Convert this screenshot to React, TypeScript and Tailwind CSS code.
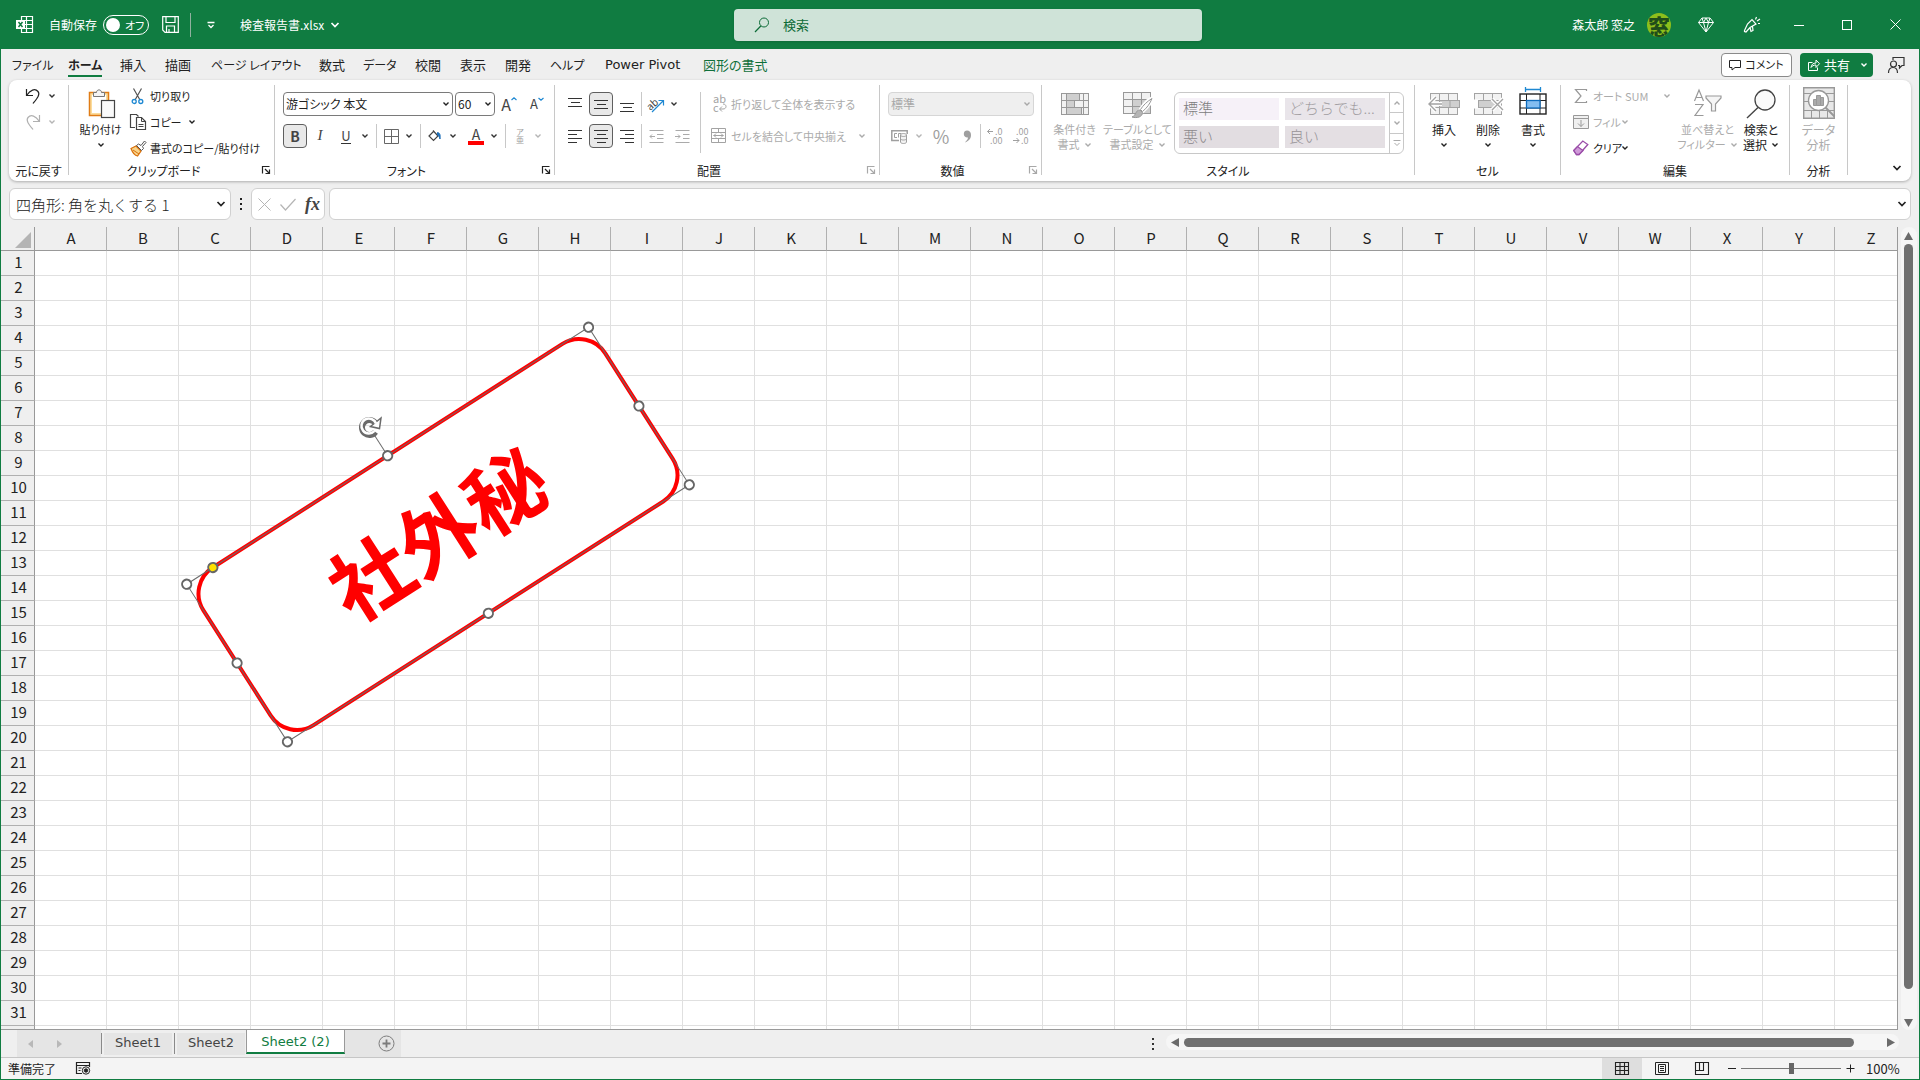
import React from 'react';

type SvgProps = { w: number; h: number; className?: string; children: React.ReactNode };

function Svg({ w, h, className = '', children }: SvgProps) {
  return (
    <svg
      width={w}
      height={h}
      viewBox={`0 0 ${w} ${h}`}
      fill="none"
      stroke="currentColor"
      strokeWidth={1}
      aria-hidden="true"
      className={`shrink-0 overflow-visible ${className}`}
    >
      {children}
    </svg>
  );
}

function Chevron({ className = '' }: { className?: string }) {
  return (
    <Svg w={8} h={6} className={className}>
      <path d="M1.5 1.5 4 4l2.5-2.5" strokeWidth={1.4} />
    </Svg>
  );
}

function BigChevron({ className = '' }: { className?: string }) {
  return (
    <Svg w={10} h={8} className={className}>
      <path d="M1.5 2 5 5.5 8.500 2" strokeWidth={1.7} />
    </Svg>
  );
}

function DropButton({ label, off = false }: { label: string; off?: boolean }) {
  return (
    <button
      type="button"
      aria-label={label}
      className={`flex h-6 w-2 items-center justify-center ${off ? 'text-[#b5b5b5]' : 'text-[#333]'}`}
    >
      <Chevron />
    </button>
  );
}

function IconButton({
  label,
  active = false,
  className = 'w-7',
  children,
}: {
  label: string;
  active?: boolean;
  className?: string;
  children: React.ReactNode;
}) {
  return (
    <button
      type="button"
      aria-label={label}
      aria-pressed={active}
      className={`flex h-6 items-center justify-center ${
        active ? 'rounded border border-[#5f5f5f] bg-[#e9e9e9]' : ''
      } ${className}`}
    >
      {children}
    </button>
  );
}

function Divider({ className = 'h-6' }: { className?: string }) {
  return <div className={`w-px shrink-0 bg-[#c8c8c8] ${className}`} />;
}

function Group({
  title,
  launcher,
  className,
  children,
}: {
  title: string;
  launcher?: 'on' | 'off';
  className: string;
  children: React.ReactNode;
}) {
  return (
    <section aria-label={title} className={`flex h-[90px] shrink-0 flex-col border-r border-[#c8c8c8] ${className}`}>
      <div className="min-h-0 flex-1">{children}</div>
      <div className="flex h-[9px] items-center">
        <div className="flex-1 text-center leading-4 whitespace-nowrap">{title}</div>
        {launcher && (
          <button
            type="button"
            aria-label={`${title}の設定`}
            className={`flex w-4 justify-center ${launcher === 'off' ? 'text-[#a8a8a8]' : 'text-[#222]'}`}
          >
            <Svg w={9} h={9}>
              <path d="M.5 7.500v-7h7M3 3l4 4M7.500 3.500v4h-4" strokeWidth={1.2} />
            </Svg>
          </button>
        )}
      </div>
    </section>
  );
}

function Lines({ rows }: { rows: [number, number, number][] }) {
  return (
    <Svg w={15} h={15} className="text-[#333]">
      {rows.map(([x, y, len]) => (
        <path key={y} d={`M${x} ${y}.5h${len}`} />
      ))}
    </Svg>
  );
}

function SmallCommand({
  icon,
  text,
  drop,
  off = false,
  textClass = '',
}: {
  icon: React.ReactNode;
  text: string;
  drop?: boolean;
  off?: boolean;
  textClass?: string;
}) {
  return (
    <button
      type="button"
      className={`flex h-[22px] items-center text-[11px] whitespace-nowrap ${off ? 'text-[#ababab]' : ''}`}
    >
      <span className="flex w-5 shrink-0 items-center">{icon}</span>
      <span className={`text-left ${textClass}`}>{text}</span>
      {drop && <Chevron />}
    </button>
  );
}

function TallCommand({
  icon,
  lines,
  off = false,
  drop,
  className,
}: {
  icon: React.ReactNode;
  lines: string[];
  off?: boolean;
  drop?: 'below' | 'inline';
  className: string;
}) {
  return (
    <button
      type="button"
      className={`flex shrink-0 flex-col items-center whitespace-nowrap ${off ? 'text-[#ababab]' : ''} ${className}`}
    >
      <span className="mb-px flex h-9 items-center">{icon}</span>
      {lines.map((line, i) => (
        <span key={line} className="flex items-center gap-1 leading-[15px]">
          {line}
          {drop === 'inline' && i === lines.length - 1 && <Chevron />}
        </span>
      ))}
      {drop === 'below' && <Chevron className="mt-[5px]" />}
    </button>
  );
}

function CellsIcon({ kind }: { kind: 'insert' | 'delete' | 'format' }) {
  if (kind === 'format') {
    return (
      <Svg w={30} h={36} className="text-[#222]">
        <path d="M8 4.500h14M7.500 2v5M22.500 2v5" stroke="#1e88d2" strokeWidth={1.3} />
        <rect x="2" y="9" width="26" height="20" fill="#fff" strokeWidth={1.4} />
        <path d="M2 15.500h26M2 23h26M8.500 9v20M22 9v20" strokeWidth={1} />
        <rect x="8.500" y="15.500" width="13.500" height="7.500" fill="#83bdf0" stroke="#0f6cbd" strokeWidth={1.3} />
      </Svg>
    );
  }
  return (
    <Svg w={34} h={36} className="text-[#a3a3a3]">
      <rect x="3.500" y="8.500" width="27" height="21" fill="#f2f2f2" />
      <path d="M3 15.500h28M3 22.500h28M12.500 8v22M21.500 8v22" />
      {kind === 'insert' ? (
        <>
          <rect x="12.500" y="15.500" width="20" height="7" fill="#cfcfcf" />
          <path d="M23 15.500v7" />
          <path d="M15 19H3M9 12l-7 7 7 7" stroke="#fff" strokeWidth={4} />
          <path d="M15 19H3M9 12l-7 7 7 7" strokeWidth={1.4} />
        </>
      ) : (
        <>
          <path d="M2 15.500h6v7H2z" fill="#fff" stroke="#fff" strokeWidth={2} />
          <rect x="7.500" y="15.500" width="16" height="7" fill="#cfcfcf" />
          <path d="m21 14 11 11M32 14 21 25" stroke="#fff" strokeWidth={4} />
          <path d="m21 14 11 11M32 14 21 25" strokeWidth={1.4} />
        </>
      )}
    </Svg>
  );
}

function GalleryCell({ text, className }: { text: string; className: string }) {
  return (
    <button
      type="button"
      className={`h-[22px] w-[100px] overflow-hidden pb-[2px] pl-1 text-left text-[15px] leading-5 font-light whitespace-nowrap [font-feature-settings:normal] ${className}`}
    >
      {text}
    </button>
  );
}

function TitleBar() {
  return (
    <header className="grid h-[49px] shrink-0 grid-cols-[733fr_468fr_717fr] items-center bg-[#107c41] text-white">
      <div className="flex items-center pl-[15px] whitespace-nowrap">
        <Svg w={17} h={17}>
          <path d="M5.500 4V.5h11v16h-11V13M5 4.500h11M5 8.500h11M5 12.500h11M10.500 1v15" strokeWidth={1.2} />
          <rect x="0" y="4" width="9" height="9" fill="#fff" stroke="none" />
          <path d="m2.500 6 4 5M6.500 6l-4 5" stroke="#107c41" strokeWidth={1.5} />
        </Svg>
        <label className="ml-4 flex items-center gap-[6px]">
          <span>自動保存</span>
          <input type="checkbox" role="switch" className="sr-only" />
          <span className="flex h-5 w-[46px] items-center gap-[5px] rounded-full border border-white pl-[2px]">
            <span className="size-[14px] rounded-full bg-white" />
            <span className="text-[11px] leading-4">オフ</span>
          </span>
        </label>
        <button type="button" aria-label="上書き保存" className="ml-[13px]">
          <Svg w={17} h={17}>
            <path d="M.7.700h15.600v15.600H3L.7 14zM4 .7v5.800h9V.7M4.500 16v-6h8v6M7 16v-3" strokeWidth={1.2} />
          </Svg>
        </button>
        <Divider className="ml-[11px] h-6 opacity-70" />
        <button type="button" aria-label="クイック アクセス" className="ml-4">
          <Svg w={8} h={8}>
            <path d="M.5 1.500h7M1.500 4 4 6.500 6.500 4" strokeWidth={1.3} />
          </Svg>
        </button>
        <button type="button" className="ml-[25px] flex items-center gap-[6px]">
          検査報告書.xlsx
          <BigChevron />
        </button>
      </div>
      <label className="flex h-8 items-center rounded bg-[#cfe3d8] pl-5 text-[13px] text-[#0c6b37] shadow">
        <Svg w={16} h={16} className="mr-[13px]">
          <circle cx="10" cy="5.500" r="4.500" />
          <path d="M6.800 9 1 15" strokeWidth={1.200} />
        </Svg>
        <input
          type="text"
          aria-label="検索"
          placeholder="検索"
          className="min-w-0 flex-1 bg-transparent outline-none placeholder:text-[#0c6b37]"
        />
      </label>
      <div className="flex items-center justify-end whitespace-nowrap">
        <span>森太郎 窓之</span>
        <span className="mr-[27px] ml-3 flex size-6 items-center justify-center overflow-hidden rounded-full bg-[#8dbf1c] text-[22px] leading-6 font-black text-[#1f4d1a]">
          窓
        </span>
        <button type="button" aria-label="Premium">
          <Svg w={16} h={16}>
            <path d="M4 1h8l3.500 4.500L8 15 .5 5.500zM.5 5.500h15M5.500 5.500 8 15l2.500-9.500M4 1l1.500 4.500L8 1l2.500 4.500L12 1" />
          </Svg>
        </button>
        <button type="button" aria-label="ペン" className="ml-[29px]">
          <Svg w={18} h={18}>
            <path
              d="M1.500 14.500 4.500 8 9 3.500l4 4.500-6 3.500-4 4.500-1.500-.5zM7 11.500l1 4 2-1-.5-4M12.500 3.500 13.500 1M14 5l3-2M15 7.500h2"
              strokeWidth={1.200}
            />
          </Svg>
        </button>
        <button type="button" aria-label="最小化" className="ml-[14px] flex w-12 justify-center">
          <Svg w={10} h={10}>
            <path d="M0 5.500h10" />
          </Svg>
        </button>
        <button type="button" aria-label="最大化" className="flex w-12 justify-center">
          <Svg w={10} h={10}>
            <rect x=".5" y=".5" width="9" height="9" />
          </Svg>
        </button>
        <button type="button" aria-label="閉じる" className="flex w-12 justify-center">
          <Svg w={11} h={11}>
            <path d="m.5.5 10 10M10.500.5l-10 10" />
          </Svg>
        </button>
      </div>
    </header>
  );
}

const tabs: [string, string][] = [
  ['ファイル', 'w-14 text-xs'],
  ['ホーム', 'w-[52px] text-xs'],
  ['挿入', 'w-[45px]'],
  ['描画', 'w-[46px]'],
  ['ページ レイアウト', 'w-[108px] text-xs'],
  ['数式', 'w-11'],
  ['データ', 'w-[52px] text-xs'],
  ['校閲', 'w-[45px]'],
  ['表示', 'w-[45px]'],
  ['開発', 'w-[45px]'],
  ['ヘルプ', 'w-[55px] text-xs'],
  ['Power Pivot', 'w-[98px]'],
  ['図形の書式', 'w-20'],
];

function TabRow() {
  return (
    <nav className="flex h-[31px] shrink-0 items-center pr-[14px] pl-[11px] text-[13px] whitespace-nowrap">
      {tabs.map(([name, width]) => (
        <div key={name} className={`shrink-0 ${width}`}>
          <button
            type="button"
            className={`flex h-6 items-center border-b-2 pt-[3px] ${
              name === 'ホーム'
                ? 'border-[#107c41] font-bold'
                : name === '図形の書式'
                  ? 'border-transparent text-[#0f703b]'
                  : name === 'Power Pivot'
                    ? "border-transparent [font-family:'DejaVu_Sans',sans-serif]"
                    : 'border-transparent'
            }`}
          >
            {name}
          </button>
        </div>
      ))}
      <button
        type="button"
        className="ml-auto flex h-6 w-[71px] items-center justify-center gap-1 rounded border border-[#8a8a8a] bg-white text-[11px]"
      >
        <Svg w={12} h={12}>
          <path d="M.5 1.500h11v7H6L3 11V8.500H.5z" />
        </Svg>
        コメント
      </button>
      <button
        type="button"
        className="ml-2 flex h-6 w-[73px] items-center rounded bg-[#107c41] pl-2 text-[13px] text-white"
      >
        <Svg w={12} h={13}>
          <path d="M4.500 4.500h-4v8h9v-3M3 9.500c.5-3 2-4.500 5-4.500V2l3.500 3.700L8 9.500V7C5.500 7 4 8 3 9.500z" />
        </Svg>
        <span className="ml-1">共有</span>
        <Chevron className="ml-[10px]" />
      </button>
      <button type="button" aria-label="共同編集" className="ml-[14px]">
        <Svg w={18} h={18} className="text-[#333]">
          <path d="M6 4V1.500h11v8h-2L12.500 12V9.500H11M1.500 17c0-4 2-5.500 4.500-5.500s4.500 1.500 4.500 5.500" strokeWidth={1.200} />
          <circle cx="6.500" cy="8" r="3" strokeWidth={1.200} />
        </Svg>
      </button>
    </nav>
  );
}

function Ribbon() {
  return (
    <div className="mx-2 flex h-[101px] shrink-0 overflow-hidden rounded-lg bg-white pt-[5px] shadow-[0_1px_3px_rgba(0,0,0,0.28)]">
      <Group title="元に戻す" className="w-[60px]">
        <div className="flex h-[22px] items-center pl-4">
          <button type="button" aria-label="元に戻す" className="w-[23px]">
            <Svg w={16} h={17}>
              <path d="M1.500 1v6.500H8M2 7c3-5 8-7 11-3.500 2.500 3-1 7-5 12" strokeWidth={1.200} />
            </Svg>
          </button>
          <DropButton label="元に戻す一覧" />
        </div>
        <div className="mt-1 flex h-[22px] items-center pl-4 text-[#b0b0b0]">
          <button type="button" aria-label="やり直し" className="w-[23px]">
            <Svg w={16} h={17}>
              <path d="M14.500 1v6.500H8M14 7C11 2 6 0 3 3.500c-2.500 3 1 7 5 12" strokeWidth={1.200} />
            </Svg>
          </button>
          <DropButton label="やり直し一覧" off />
        </div>
      </Group>

      <Group title="クリップボード" launcher="on" className="w-[206px]">
        <div className="flex">
          <TallCommand
            className="w-[61px] pl-[2px] text-[11px]"
            lines={['貼り付け']}
            drop="below"
            icon={
              <Svg w={28} h={32}>
                <rect x="2.500" y="5.500" width="19" height="23" stroke="#e07c16" strokeWidth={1.500} fill="#fbdc9c" />
                <rect x="5" y="8" width="14" height="18" fill="#fff" stroke="none" />
                <path d="M6.500 9.500V5.500h3c0-3.500 5-3.500 5 0h3v4z" fill="#f4f4f4" stroke="#777" />
                <rect x="14.500" y="13.500" width="13" height="17" fill="#fafafa" stroke="#444" strokeWidth={1.200} />
              </Svg>
            }
          />
          <div className="flex flex-col gap-1">
            <SmallCommand
              text="切り取り"
              icon={
                <Svg w={14} h={17} className="ml-px">
                  <path d="M2.500.5 9 12M10.500.5 4 12" stroke="#555" strokeWidth={1.200} />
                  <circle cx="3.200" cy="13.500" r="2" stroke="#1e88d2" strokeWidth={1.300} />
                  <circle cx="9.800" cy="13.500" r="2" stroke="#1e88d2" strokeWidth={1.300} />
                </Svg>
              }
            />
            <SmallCommand
              text="コピー"
              textClass="w-[38px]"
              drop
              icon={
                <Svg w={17} h={17}>
                  <path d="M5 13.500H.5V.5h6l2 2" stroke="#444" strokeWidth={1.200} />
                  <path d="M6.500 3.500h5l4 4v8h-9z" fill="#fff" stroke="#444" strokeWidth={1.200} />
                  <path d="M11.500 3.500v4h4M8.500 10.500h5M8.500 12.500h5" stroke="#444" />
                </Svg>
              }
            />
            <SmallCommand
              text="書式のコピー/貼り付け"
              icon={
                <Svg w={17} h={17}>
                  <path d="M1 8.500 6 6l5 5-3.500 5c-3-.5-5-3.500-6.500-7.500z" fill="#f8d48b" stroke="#d9700b" strokeWidth={1.200} />
                  <path d="m3 10 6 4" stroke="#d9700b" />
                  <path d="m6.500 5.500 2-1.500 2.500 1.500L14.500 1l1.500 1.500-3.500 4 1 2-2 2z" fill="#fff" stroke="#555" />
                </Svg>
              }
            />
          </div>
        </div>
      </Group>

      <Group title="フォント" launcher="on" className="w-[280px]">
        <div className="flex h-[31px] items-end pl-2">
          <div className="flex h-6 w-[170px] items-center rounded border border-[#7a7a7a] bg-white">
            <select aria-label="フォント名" className="w-full appearance-none bg-transparent pl-[2px] outline-none">
              <option>游ゴシック 本文</option>
            </select>
            <Chevron className="mr-[2px]" />
          </div>
          <div className="ml-[2px] flex h-6 w-10 items-center rounded border border-[#7a7a7a] bg-white">
            <select aria-label="フォント サイズ" className="w-full appearance-none bg-transparent pl-[2px] outline-none">
              <option>60</option>
            </select>
            <Chevron className="mr-[2px]" />
          </div>
          <IconButton label="フォント サイズの拡大" className="w-7">
            <span className="text-base leading-6 text-[#444]">A</span>
            <Svg w={6} h={14}>
              <path d="M.5 3 3 .8 5.500 3" stroke="#1e88d2" strokeWidth={1.200} />
            </Svg>
          </IconButton>
          <IconButton label="フォント サイズの縮小">
            <span className="text-[13px] leading-6 text-[#444]">A</span>
            <Svg w={6} h={14}>
              <path d="M.5 1 3 3.200 5.500 1" stroke="#1e88d2" strokeWidth={1.200} />
            </Svg>
          </IconButton>
        </div>
        <div className="mt-2 flex h-6 items-center pl-2">
          <IconButton label="太字" active className="w-6">
            <span className="text-sm font-bold text-[#444]">B</span>
          </IconButton>
          <IconButton label="斜体" className="w-[26px]">
            <span className="text-[15px] text-[#444] italic [font-family:'Liberation_Serif',serif]">I</span>
          </IconButton>
          <IconButton label="下線" className="w-[26px]">
            <span className="border-b border-[#333] text-[13px] leading-[15px] text-[#444]">U</span>
          </IconButton>
          <div className="mr-[7px] ml-[2px]">
            <DropButton label="下線の種類" />
          </div>
          <Divider />
          <IconButton label="罫線">
            <Svg w={15} h={15} className="text-[#666]">
              <path d="M.5.5h14v14H.5zM7.500.5v14M.5 7.500h14" />
            </Svg>
          </IconButton>
          <div className="mr-[7px]">
            <DropButton label="罫線の種類" />
          </div>
          <Divider />
          <IconButton label="塗りつぶしの色">
            <Svg w={14} h={14}>
              <path d="M5.500 2.500 1 7l4.500 4.500L10 7 5 1.500" stroke="#444" strokeWidth={1.200} />
              <path d="M9.500 3.500C12 4 12.500 6 12 10c-1-3-1.500-4-2.500-4z" fill="#1e6fb8" stroke="#1e6fb8" />
            </Svg>
          </IconButton>
          <DropButton label="塗りつぶしの色一覧" />
          <IconButton label="フォントの色" className="ml-[5px] w-7">
            <span className="flex w-4 flex-col items-center border-b-4 border-[#f00] text-sm leading-[13px] text-[#444]">A</span>
          </IconButton>
          <div className="mr-[7px]">
            <DropButton label="フォントの色一覧" />
          </div>
          <Divider />
          <IconButton label="ふりがな">
            <span className="flex flex-col items-center text-[8px] leading-2 text-[#a0a0a0]">
              <span>ア</span>
              <span>亜</span>
            </span>
          </IconButton>
          <DropButton label="ふりがなの設定" off />
        </div>
      </Group>

      <Group title="配置" launcher="off" className="w-[325px]">
        <div className="flex pt-[7px]">
          <div className="flex w-[145px] flex-col gap-2">
            <div className="flex h-6 items-center pl-[6px]">
              <IconButton label="上揃え">
                <Lines rows={[[0, 3, 14], [3, 7, 9], [0, 11, 14]].map(([x, y, l]) => [x, y - 2, l])} />
              </IconButton>
              <IconButton label="上下中央揃え" active className="w-6">
                <Lines rows={[[0, 3, 14], [3, 7, 9], [0, 11, 14]]} />
              </IconButton>
              <IconButton label="下揃え">
                <Lines rows={[[0, 6, 14], [3, 10, 9], [0, 14, 14]]} />
              </IconButton>
              <Divider />
              <IconButton label="方向">
                <Svg w={18} h={18}>
                  <text x="-1" y="13" fontSize="10" fill="#444" stroke="none" transform="rotate(-42 5 9)">ab</text>
                  <path d="M5 17 16 6M11.500 5.500H16.500V10.500" stroke="#1e88d2" strokeWidth={1.200} />
                </Svg>
              </IconButton>
              <DropButton label="方向一覧" />
            </div>
            <div className="flex h-6 items-center pl-[6px]">
              <IconButton label="左揃え">
                <Lines rows={[[0, 1, 14], [0, 5, 9], [0, 9, 14], [0, 13, 9]]} />
              </IconButton>
              <IconButton label="中央揃え" active className="w-6">
                <Lines rows={[[0, 1, 14], [3, 5, 9], [0, 9, 14], [3, 13, 9]]} />
              </IconButton>
              <IconButton label="右揃え">
                <Lines rows={[[0, 1, 14], [5, 5, 9], [0, 9, 14], [5, 13, 9]]} />
              </IconButton>
              <Divider />
              <IconButton label="インデントを減らす">
                <Svg w={15} h={15} className="text-[#aaa]">
                  <path d="M.5 1.500h14M8 5.500h6.500M8 9.500h6.500M.5 13.500h14M6 7.500H1M3 5.500l-2 2 2 2" />
                </Svg>
              </IconButton>
              <IconButton label="インデントを増やす" className="w-6">
                <Svg w={15} h={15} className="text-[#aaa]">
                  <path d="M.5 1.500h14M8 5.500h6.500M8 9.500h6.500M.5 13.500h14M0 7.500h5M3 5.500l2 2-2 2" />
                </Svg>
              </IconButton>
            </div>
          </div>
          <Divider className="h-[61px]" />
          <div className="flex flex-col gap-[10px] pt-px pl-[10px]">
            <SmallCommand
              off
              text="折り返して全体を表示する"
              icon={
                <Svg w={16} h={18} className="text-[#a3a3a3]">
                  <text x="2" y="8" fontSize="11" fill="currentColor" stroke="none">ab</text>
                  <text x="2" y="17" fontSize="11" fill="currentColor" stroke="none">c</text>
                  <path d="M12 9c4 0 4 5 0 5H9M11 11.500 8.500 14l2.500 2.500" />
                </Svg>
              }
            />
            <SmallCommand
              off
              drop
              text="セルを結合して中央揃え"
              textClass="w-[127px]"
              icon={
                <Svg w={16} h={16} className="text-[#a3a3a3]">
                  <path d="M.5.5h14v14H.5zM.5 4.500h14M.5 10.500h14M7.500.5v4M7.500 10.500v4M2.500 7.500h10M5 5.500l-2 2 2 2M10 5.500l2 2-2 2" />
                </Svg>
              }
            />
          </div>
        </div>
      </Group>

      <Group title="数値" launcher="off" className="w-[162px]">
        <div className="flex h-[31px] items-end pl-2">
          <div className="flex h-6 w-[146px] items-center rounded border border-[#d6d6d6] bg-[#efefef] text-[#a8a8a8]">
            <select disabled aria-label="表示形式" className="w-full appearance-none bg-transparent pl-[2px] opacity-100">
              <option>標準</option>
            </select>
            <Chevron className="mr-[2px]" />
          </div>
        </div>
        <div className="mt-2 flex h-6 items-center pl-[6px] text-[#9f9f9f]">
          <IconButton label="通貨表示形式">
            <Svg w={18} h={15}>
              <path d="M8 11.500H.8V1.700h15.400V5" strokeWidth={1.500} />
              <path d="M6 4.500H3.500v4H6M7.500 8.500v-4H10v1" />
              <path d="M9.500 6v7c0 2 6 2 6 0V6c0-2-6-2-6 0zm0 0c0 2 6 2 6 0m-6 3.500c0 2 6 2 6 0" fill="#f3f3f3" />
            </Svg>
          </IconButton>
          <div className="ml-px">
            <DropButton label="通貨一覧" off />
          </div>
          <IconButton label="パーセント" className="ml-[5px] w-[26px]">
            <span className="text-lg leading-6">%</span>
          </IconButton>
          <IconButton label="桁区切り" className="w-[26px]">
            <Svg w={9} h={13}>
              <path d="M4 .5c2.500 0 4 1.500 4 4.500 0 4-2.500 6-6 7.500 1-1.500 3-3 3-5C3 8 .8 6.500.8 4S2.300.5 4 .5z" fill="currentColor" stroke="none" />
            </Svg>
          </IconButton>
          <Divider />
          <IconButton label="小数点以下の表示桁数を増やす">
            <Svg w={18} h={18}>
              <text x="9" y="8" fontSize="9" fill="currentColor" stroke="none">.0</text>
              <text x="4" y="17" fontSize="9" fill="currentColor" stroke="none">.00</text>
              <path d="M7 4.500H1.500M4 2 1.500 4.500 4 7" />
            </Svg>
          </IconButton>
          <IconButton label="小数点以下の表示桁数を減らす" className="w-6">
            <Svg w={18} h={18}>
              <text x="4" y="8" fontSize="9" fill="currentColor" stroke="none">.00</text>
              <text x="9" y="17" fontSize="9" fill="currentColor" stroke="none">.0</text>
              <path d="M1 13.500h6M4.500 11 7 13.500 4.500 16" />
            </Svg>
          </IconButton>
        </div>
      </Group>

      <Group title="スタイル" className="w-[373px]">
        <div className="flex">
          <TallCommand
            off
            className="w-[63px] pl-[2px] text-[11px]"
            lines={['条件付き', '書式']}
            drop="inline"
            icon={
              <Svg w={28} h={30} className="text-[#999]">
                <rect x=".5" y="5.500" width="27" height="21" fill="#f2f2f2" />
                <path d="M5.500 5.500h13v7h-13zM5.500 12.500h8v7h-8zM5.500 19.500h15v7h-15z" fill="#cfcfcf" />
                <path d="M.5 12.500h27M.5 19.500h27M5.500 5v22M22.500 5v22" />
              </Svg>
            }
          />
          <TallCommand
            off
            className="w-[65px] text-[11px]"
            lines={['テーブルとして', '書式設定']}
            drop="inline"
            icon={
              <Svg w={30} h={30} className="text-[#999]">
                <rect x=".5" y="4.500" width="27" height="21" fill="#f2f2f2" />
                <path d="M9.500 11.500h18v14h-18z" fill="#cfcfcf" />
                <path d="M.5 11.500h27M.5 18.500h27M9.500 4v21M18.500 4v21" />
                <path d="M29 10c-5 2-10 8-12 12 1 0 2 1 2.500 2C24 20 29 15 29 10z" fill="#fff" stroke="#fff" strokeWidth={3} />
                <path d="M29 10.500c-5 3-9 7-11.500 11l2 2C24 20 27 15.500 29 10.500z" fill="#fff" />
                <path d="M17 22c-5 0-3 5-8 7 5 1.500 10.500 0 10.500-4.500z" fill="#b5b5b5" />
              </Svg>
            }
          />
          <div className="mt-[7px] ml-1 flex h-[62px] w-[230px] rounded-md border border-[#c8c8c8]">
            <div className="grid flex-1 grid-cols-[100px_100px] content-center gap-[6px] pl-1">
              <GalleryCell text="標準" className="bg-[#f6f1f8] text-[#7c7c7c]" />
              <GalleryCell text="どちらでも..." className="bg-[#e9e5ea] text-[#a09ca0]" />
              <GalleryCell text="悪い" className="bg-[#e2dde1] text-[#8c888b]" />
              <GalleryCell text="良い" className="bg-[#e4dfe3] text-[#979397]" />
            </div>
            <div className="flex w-[14px] flex-col divide-y divide-[#c8c8c8] border-l border-[#c8c8c8] text-[#aaa]">
              <button type="button" aria-label="上へ" className="flex flex-1 items-center justify-center">
                <Chevron className="rotate-180" />
              </button>
              <button type="button" aria-label="下へ" className="flex flex-1 items-center justify-center">
                <Chevron />
              </button>
              <button type="button" aria-label="その他" className="flex flex-1 items-center justify-center">
                <Svg w={8} h={8}>
                  <path d="M.5 1.500h7M1.500 4 4 6.500 6.500 4" />
                </Svg>
              </button>
            </div>
          </div>
        </div>
      </Group>

      <Group title="セル" className="w-[146px]">
        <div className="flex pl-[7px]">
          <TallCommand className="w-11" lines={['挿入']} drop="below" icon={<CellsIcon kind="insert" />} />
          <TallCommand className="w-11" lines={['削除']} drop="below" icon={<CellsIcon kind="delete" />} />
          <TallCommand className="w-[46px]" lines={['書式']} drop="below" icon={<CellsIcon kind="format" />} />
        </div>
      </Group>

      <Group title="編集" className="w-[229px]">
        <div className="flex pl-3">
          <div className="flex w-[105px] flex-col gap-1">
            <SmallCommand
              off
              drop
              text="オート SUM"
              textClass="w-[70px]"
              icon={
                <Svg w={17} h={16} className="text-[#999]">
                  <path d="M13.500 3V1.500H2.500L8 8l-5.500 6.500h11V13" strokeWidth={1.200} />
                </Svg>
              }
            />
            <SmallCommand
              off
              drop
              text="フィル"
              textClass="w-7"
              icon={
                <Svg w={17} h={15} className="text-[#999]">
                  <path d="M.5.5h15v13H.5z" fill="#f0f0f0" />
                  <path d="M.5 3.500h15M8 5v6.500M5 8.500l3 3 3-3" />
                </Svg>
              }
            />
            <SmallCommand
              drop
              text="クリア"
              textClass="w-7"
              icon={
                <Svg w={17} h={16}>
                  <path d="m.8 10.500 9-9.500 5 3.500L6 14.500H3.500z" fill="#fff" stroke="#9a4da8" strokeWidth={1.300} />
                  <path d="m.8 10.500 3.700-4 5.500 4-4 4H3.500z" fill="#cf9ad8" stroke="#9a4da8" strokeWidth={1.300} />
                </Svg>
              }
            />
          </div>
          <TallCommand
            off
            className="w-[59px] text-[11px]"
            lines={['並べ替えと', 'フィルター']}
            drop="inline"
            icon={
              <Svg w={30} h={30} className="text-[#999]">
                <path d="m1.500 13 4.500-11 4.500 11M3 9.500h6M2 16.500h8L2 27.500h8.500" strokeWidth={1.200} />
                <path d="M13 8h15v2l-5.500 6v7h-4v-7L13 10z" strokeWidth={1.200} fill="#f5f5f5" />
              </Svg>
            }
          />
          <TallCommand
            className="w-12"
            lines={['検索と', '選択']}
            drop="inline"
            icon={
              <Svg w={30} h={32} className="text-[#444]">
                <circle cx="19" cy="13" r="10" strokeWidth={1.300} fill="#fafafa" />
                <path d="M12 20.500 1 31" strokeWidth={1.400} />
              </Svg>
            }
          />
        </div>
      </Group>

      <Group title="分析" className="w-[58px]">
        <TallCommand
          off
          className="w-full"
          lines={['データ', '分析']}
          icon={
            <Svg w={32} h={32} className="text-[#999]">
              <path d="M.7.700h30.600v30.600H.7z" fill="#e8e8e8" strokeWidth={1.400} />
              <path d="M1 6.500h30M1 23.500h30M8.500 23v8M16.500 23v8M24.500 23v8M1 14.500h5M26 14.500h5" />
              <circle cx="15.500" cy="13.500" r="10" fill="#fff" strokeWidth={1.300} />
              <path d="m22.500 20.500 9 9" strokeWidth={2} />
              <path d="M10.500 12.500h3v6h-3zM13.500 8.500h4v10h-4zM17.500 10.500h3v8h-3z" fill="#aaa" />
            </Svg>
          }
        />
      </Group>
      <button type="button" aria-label="リボンの表示オプション" className="mr-[9px] ml-auto self-end pb-[9px]">
        <BigChevron />
      </button>
    </div>
  );
}

function FormulaBar() {
  return (
    <div className="flex h-[46px] shrink-0 items-center px-2">
      <div className="flex h-8 w-[222px] shrink-0 items-center rounded-md border border-[#d0d0d0] bg-white pr-1">
        <input
          type="text"
          aria-label="名前ボックス"
          defaultValue="四角形: 角を丸くする 1"
          className="min-w-0 flex-1 bg-transparent pt-[2px] pl-[6px] text-[15px] font-light outline-none [font-feature-settings:normal]"
        />
        <button type="button" aria-label="名前の一覧">
          <BigChevron />
        </button>
      </div>
      <div className="flex w-5 shrink-0 justify-center">
        <Svg w={2} h={12}>
          <path d="M1 0v2M1 5v2M1 10v2" strokeWidth={2} />
        </Svg>
      </div>
      <div className="flex h-8 w-[74px] shrink-0 items-center justify-between rounded-md border border-[#d0d0d0] bg-white pr-1 pl-[6px] text-[#b5b5b5]">
        <button type="button" aria-label="キャンセル">
          <Svg w={13} h={13}>
            <path d="m.5.5 12 12M12.500.5l-12 12" />
          </Svg>
        </button>
        <button type="button" aria-label="入力">
          <Svg w={16} h={13}>
            <path d="m.5 6.500 5 5.500L15.500 1" strokeWidth={1.200} />
          </Svg>
        </button>
        <button
          type="button"
          aria-label="関数の挿入"
          className="text-lg leading-6 font-bold text-[#444] italic [font-family:'Liberation_Serif',serif]"
        >
          fx
        </button>
      </div>
      <div className="ml-1 flex h-8 min-w-0 flex-1 items-center rounded-md border border-[#d0d0d0] bg-white pr-[3px]">
        <input type="text" aria-label="数式バー" className="min-w-0 flex-1 bg-transparent px-2 text-[15px] outline-none" />
        <button type="button" aria-label="数式バーの展開">
          <BigChevron />
        </button>
      </div>
    </div>
  );
}

const columns = 'ABCDEFGHIJKLMNOPQRSTUVWXYZ'.split('');
const rowNumbers = Array.from({ length: 32 }, (_, i) => i + 1);

function Handle({ x, y, fill = '#fff' }: { x: number; y: number; fill?: string }) {
  return <circle cx={x} cy={y} r={4.600} fill={fill} stroke="#666" strokeWidth={2} />;
}

function StampShape() {
  const left = 199.500;
  const right = 676.500;
  const top = 441;
  const bottom = 628;
  const middle = 438;
  return (
    <svg
      width={520}
      height={430}
      viewBox="178 319 520 430"
      className="absolute top-[92px] left-[177px] [font-feature-settings:normal]"
      role="img"
      aria-label="四角形: 角を丸くする 1"
    >
      <g transform="rotate(-32.600 438 534.500)">
        <rect x={left} y={top} width={477} height={187} rx={31} fill="#fff" stroke="#f00" strokeWidth={4} />
        <text x={438} y={565} textAnchor="middle" fontSize={80} fontWeight={700} fill="#f00">
          社外秘
        </text>
        <rect x={left} y={top} width={477} height={187} fill="none" stroke="#6b6b6b" strokeWidth={1} />
        <path d={`M${middle} ${top}v-25`} stroke="#6b6b6b" />
        <Handle x={left} y={top} />
        <Handle x={middle} y={top} />
        <Handle x={right} y={top} />
        <Handle x={left} y={534.500} />
        <Handle x={right} y={534.500} />
        <Handle x={left} y={bottom} />
        <Handle x={middle} y={bottom} />
        <Handle x={right} y={bottom} />
        <Handle x={230.500} y={top} fill="#ffe100" />
      </g>
      <g fill="none" stroke="#6b6b6b">
        <path d="M375.500 432A7.500 7.500 0 1 1 375 422.500" strokeWidth={6} />
        <path d="M381 418 379.500 428.500 370.500 426.500z" fill="#fff" strokeWidth={1.500} />
        <path d="M374.500 431A7.500 7.500 0 1 1 376 423.500" stroke="#fff" strokeWidth={2.500} />
      </g>
    </svg>
  );
}

function Sheet() {
  return (
    <main className="flex min-h-0 flex-1">
      <div className="relative min-w-0 flex-1 overflow-hidden border-r border-b border-[#999]">
        <table className="w-max table-fixed border-separate border-spacing-0 text-[15px] leading-5 [font-feature-settings:normal]">
          <thead>
            <tr className="h-6 bg-[#efefef]">
              <th className="w-[34px] min-w-[34px] border-r border-b border-[#999] p-0">
                <Svg w={16} h={16} className="mt-[3px] ml-[14px]">
                  <path d="M16 0v16H0z" fill="#b4b4b4" stroke="none" />
                </Svg>
              </th>
              {columns.map((c) => (
                <th
                  key={c}
                  scope="col"
                  className="w-[72px] min-w-[72px] border-r border-b border-r-[#b0b0b0] border-b-[#999] p-0 pb-[2px] pl-px font-normal"
                >
                  {c}
                </th>
              ))}
            </tr>
          </thead>
          <tbody>
            {rowNumbers.map((r) => (
              <tr key={r} className="h-[25px]">
                <th
                  scope="row"
                  className="border-r border-b border-[#999] border-b-[#b0b0b0] bg-[#efefef] p-0 pb-[2px] pl-[2px] font-normal"
                >
                  {r}
                </th>
                {columns.map((c) => (
                  <td key={c} className="border-r border-b border-[#e0e0e0] bg-white p-0" />
                ))}
              </tr>
            ))}
          </tbody>
        </table>
        <StampShape />
      </div>
      <div className="flex w-[21px] shrink-0 justify-center">
        <div className="flex w-4 flex-col items-center rounded-full bg-[#f6f6f6] text-[#6b6b6b]">
          <button type="button" aria-label="上へスクロール" className="flex h-[17px] items-center">
            <Svg w={9} h={8}>
              <path d="M4.500 0 9 8H0z" fill="currentColor" stroke="none" />
            </Svg>
          </button>
          <div className="w-[9px] flex-1 rounded-full bg-[#707070]" />
          <button type="button" aria-label="下へスクロール" className="flex h-[41px] items-end pb-[3px]">
            <Svg w={9} h={8}>
              <path d="M0 0h9L4.500 8z" fill="currentColor" stroke="none" />
            </Svg>
          </button>
        </div>
      </div>
    </main>
  );
}

function SheetTabs() {
  return (
    <div className="flex h-7 shrink-0 border-b border-[#c6c6c6] pl-4 text-[13px] text-[#444] [font-family:'DejaVu_Sans',sans-serif]">
      <div className="flex w-[84px] items-center gap-[24px] bg-[#e5e5e5] pl-[11px] text-[#b8b8b8]">
        <button type="button" aria-label="前のシート">
          <Svg w={5} h={8}>
            <path d="M5 0v8L0 4z" fill="currentColor" stroke="none" />
          </Svg>
        </button>
        <button type="button" aria-label="次のシート">
          <Svg w={5} h={8}>
            <path d="M0 0v8l5-4z" fill="currentColor" stroke="none" />
          </Svg>
        </button>
      </div>
      <div className="my-[3px] flex items-center border-l border-[#8a8a8a] pl-[2px]">
        <button type="button" className="h-[22px] w-[68px] bg-[#e5e5e5] pb-[2px]">Sheet1</button>
      </div>
      <div className="my-[3px] ml-[2px] flex items-center border-l border-[#8a8a8a] pl-[2px]">
        <button type="button" className="h-[22px] w-[68px] bg-[#e5e5e5] pb-[2px]">Sheet2</button>
      </div>
      <button
        type="button"
        className="-mt-px ml-px h-[25px] w-[99px] border-x border-b-2 border-x-[#999] border-b-[#107c41] bg-white pt-[3px] text-[#107c41]"
      >
        Sheet2 (2)
      </button>
      <div className="flex w-14 items-center justify-end bg-[#e5e5e5] pr-[6px] text-[#7d7d7d]">
        <button type="button" aria-label="新しいシート">
          <Svg w={17} h={17}>
            <circle cx="8.500" cy="8.500" r="7.500" />
            <path d="M8.500 4.500v8M4.500 8.500h8" strokeWidth={1.800} />
          </Svg>
        </button>
      </div>
      <div className="ml-auto flex w-[767px] items-center pr-5">
        <Svg w={2} h={12} className="text-[#333]">
          <path d="M1 0v2M1 5v2M1 10v2" strokeWidth={2} />
        </Svg>
        <div className="mb-[3px] ml-3 flex h-4 flex-1 items-center rounded-full bg-[#f6f6f6] text-[#6b6b6b]">
          <button type="button" aria-label="左へスクロール" className="flex w-[18px] justify-center">
            <Svg w={8} h={9}>
              <path d="M8 0v9L0 4.500z" fill="currentColor" stroke="none" />
            </Svg>
          </button>
          <div className="h-[9px] flex-1 rounded-full bg-[#707070]" />
          <button type="button" aria-label="右へスクロール" className="flex w-[45px] justify-end pr-1">
            <Svg w={8} h={9}>
              <path d="M0 0v9l8-4.500z" fill="currentColor" stroke="none" />
            </Svg>
          </button>
        </div>
      </div>
    </div>
  );
}

function StatusBar() {
  return (
    <footer className="flex h-[21px] shrink-0 items-center bg-[#f4f4f4] pl-[7px]">
      <span className="leading-5">準備完了</span>
      <button type="button" aria-label="マクロの記録" className="ml-5">
        <Svg w={15} h={13} className="text-[#222]">
          <path d="M6 11.500H.5V.5h13V5M.5 3.500h13M2.500 6h3M2.500 8.500h2" strokeWidth={1.200} />
          <circle cx="10" cy="8.500" r="3.700" />
          <circle cx="10" cy="8.500" r="1.700" fill="currentColor" />
        </Svg>
      </button>
      <div className="ml-auto flex h-full items-center text-[#222]">
        <button type="button" aria-label="標準" className="flex h-full w-10 items-center justify-center bg-[#dedede]">
          <Svg w={14} h={13}>
            <path d="M.5.5h13v12H.5zM.5 4.500h13M.5 8.500h13M5 .5v12M9.500.5v12" strokeWidth={1.100} />
          </Svg>
        </button>
        <button type="button" aria-label="ページ レイアウト" className="flex h-full w-10 items-center justify-center">
          <Svg w={14} h={13}>
            <path d="M.5.5h13v12H.5zM3.500 2.500h7v8h-7zM5 4.500h4M5 6.500h4M5 8.500h4" />
          </Svg>
        </button>
        <button type="button" aria-label="改ページ プレビュー" className="flex h-full w-10 items-center justify-center">
          <Svg w={14} h={13}>
            <path d="M.5.5h13v12H.5zM.5 8.500h8V.5M4.500.5v8" strokeWidth={1.100} />
          </Svg>
        </button>
        <button type="button" aria-label="縮小" className="flex w-[19px] justify-center">
          <Svg w={8} h={9}>
            <path d="M0 4.500h8" />
          </Svg>
        </button>
        <input
          type="range"
          aria-label="ズーム"
          defaultValue={50}
          className="h-3 w-[100px] appearance-none bg-transparent bg-[linear-gradient(#777,#777)] bg-[length:100%_1px] bg-center bg-no-repeat [&::-webkit-slider-thumb]:h-[11px] [&::-webkit-slider-thumb]:w-[5px] [&::-webkit-slider-thumb]:appearance-none [&::-webkit-slider-thumb]:bg-[#666]"
        />
        <button type="button" aria-label="拡大" className="flex w-[18px] justify-center">
          <Svg w={9} h={9}>
            <path d="M.5 4.500h8M4.500.5v8" />
          </Svg>
        </button>
        <button type="button" className="w-[60px] pl-[7px] text-left text-[13px] leading-5">
          100%
        </button>
      </div>
    </footer>
  );
}

export default function App() {
  return (
    <div className="flex h-screen flex-col overflow-hidden border-x border-b border-[#107c41] bg-[#efefef] text-xs text-[#222] [font-family:'Noto_Sans_CJK_JP',sans-serif] [font-feature-settings:'palt']">
      <TitleBar />
      <TabRow />
      <Ribbon />
      <FormulaBar />
      <Sheet />
      <SheetTabs />
      <StatusBar />
    </div>
  );
}
